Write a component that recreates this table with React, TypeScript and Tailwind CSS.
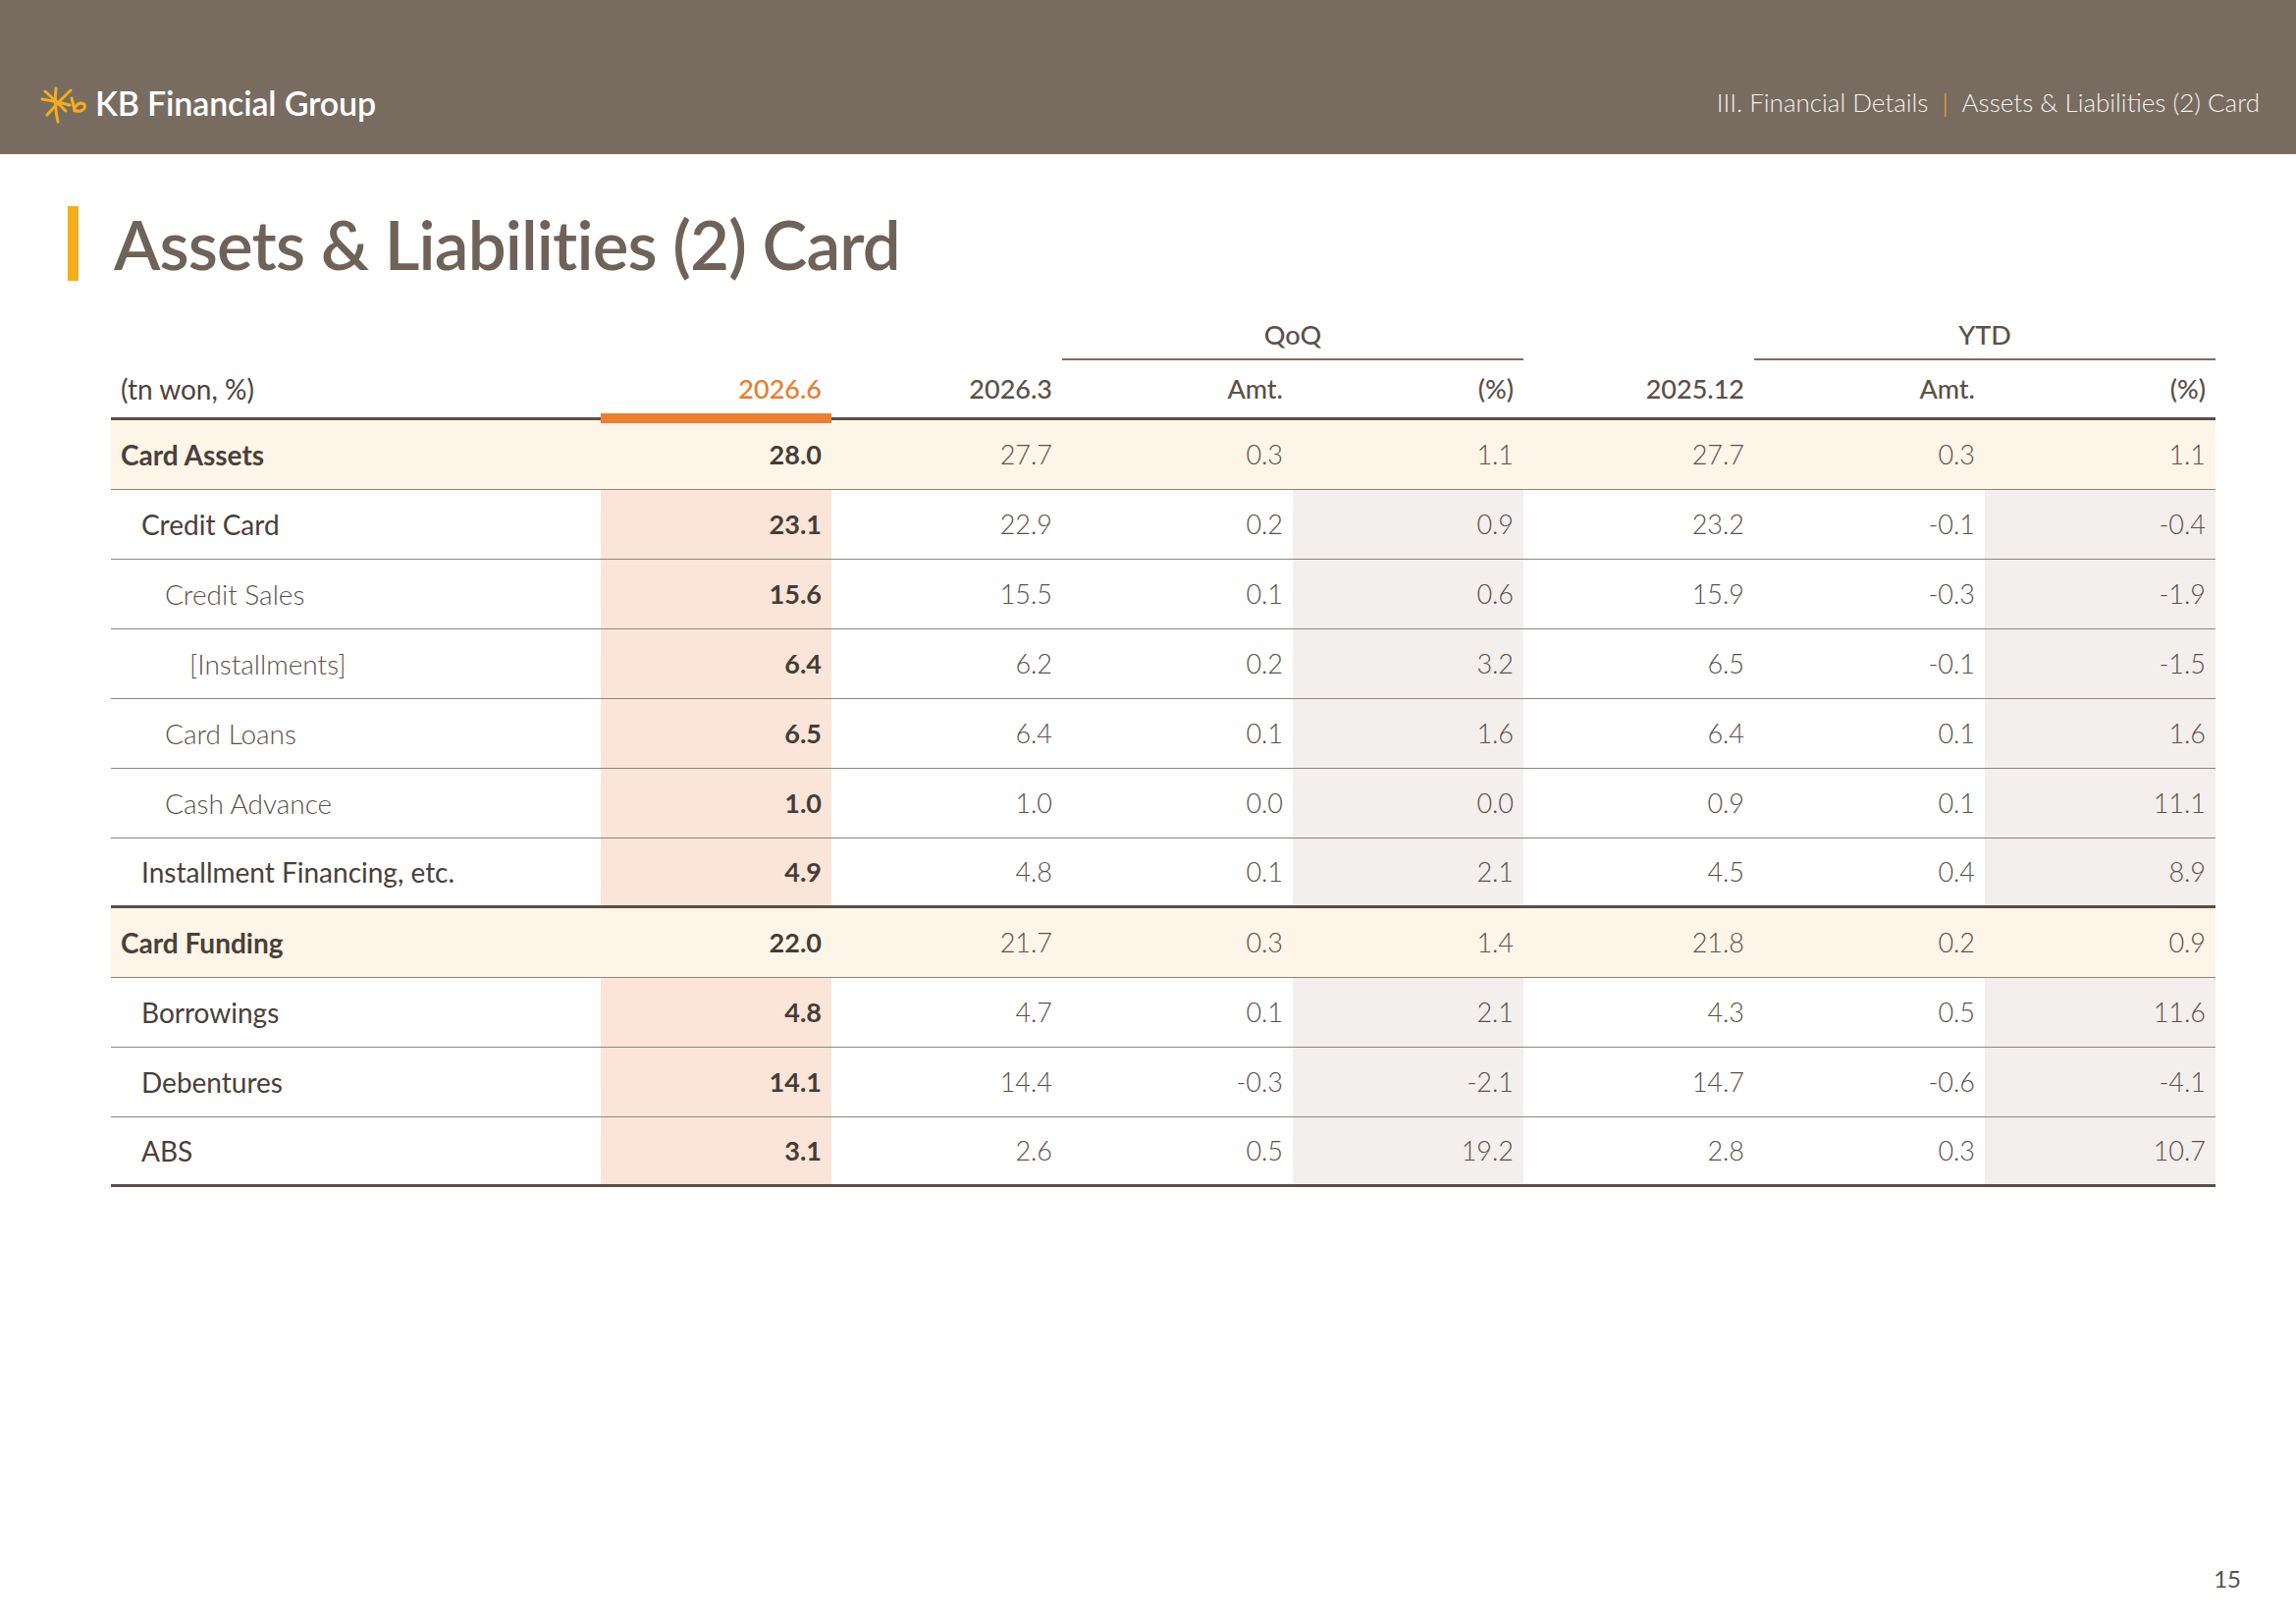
import React from 'react';

type Row = {
  label: string;
  indent: number;
  total?: boolean;
  thick?: boolean;
  vals: string[];
};

const rows: Row[] = [
  { label: 'Card Assets', indent: 0, total: true, vals: ['28.0', '27.7', '0.3', '1.1', '27.7', '0.3', '1.1'] },
  { label: 'Credit Card', indent: 1, vals: ['23.1', '22.9', '0.2', '0.9', '23.2', '-0.1', '-0.4'] },
  { label: 'Credit Sales', indent: 2, vals: ['15.6', '15.5', '0.1', '0.6', '15.9', '-0.3', '-1.9'] },
  { label: '[Installments]', indent: 3, vals: ['6.4', '6.2', '0.2', '3.2', '6.5', '-0.1', '-1.5'] },
  { label: 'Card Loans', indent: 2, vals: ['6.5', '6.4', '0.1', '1.6', '6.4', '0.1', '1.6'] },
  { label: 'Cash Advance', indent: 2, vals: ['1.0', '1.0', '0.0', '0.0', '0.9', '0.1', '11.1'] },
  { label: 'Installment Financing, etc.', indent: 1, thick: true, vals: ['4.9', '4.8', '0.1', '2.1', '4.5', '0.4', '8.9'] },
  { label: 'Card Funding', indent: 0, total: true, vals: ['22.0', '21.7', '0.3', '1.4', '21.8', '0.2', '0.9'] },
  { label: 'Borrowings', indent: 1, vals: ['4.8', '4.7', '0.1', '2.1', '4.3', '0.5', '11.6'] },
  { label: 'Debentures', indent: 1, vals: ['14.1', '14.4', '-0.3', '-2.1', '14.7', '-0.6', '-4.1'] },
  { label: 'ABS', indent: 1, thick: true, vals: ['3.1', '2.6', '0.5', '19.2', '2.8', '0.3', '10.7'] },
];

const indentCls = ['pl-[10px]', 'pl-[31px]', 'pl-[55px]', 'pl-[80px]'];

const gridCols = 'grid grid-cols-[499px_repeat(7,235px)]';

// KB star mark
function KbLogo() {
  return (
    <svg width="54" height="44" viewBox="0 0 54 44" fill="none">
      <g stroke="#f5ad1c" strokeWidth="3" strokeLinecap="round" strokeLinejoin="round">
        <path d="M21 7 Q19 24 23 41" />
        <path d="M7 18 Q20 20 35 24" />
        <path d="M10 10 Q20 19 31 30" />
        <path d="M36 9 Q24 20 12 34" />
        <path d="M37 17 Q39 24 40 30" />
        <path d="M40 27 Q44 20 50 23 Q52 28 46 30 Q43 31 40 29" />
      </g>
    </svg>
  );
}

function cellBg(row: Row, i: number) {
  if (row.total) return '';
  if (i === 0) return 'bg-[#fae5d8]';
  if (i === 3 || i === 6) return 'bg-[#f2efed]';
  return '';
}

export default function App() {
  return (
    <div
      className="relative w-[2339px] h-[1654px] bg-white text-[#5b5048]"
      style={{ fontFamily: 'Lato, "Open Sans", "Liberation Sans", sans-serif' }}
    >
      {/* top bar */}
      <header className="flex h-[157px] items-center justify-between bg-[#786c60] pl-[36px] pr-[37px] pt-[52px]">
        <div className="flex items-center gap-[7px]">
          <KbLogo />
          <span className="text-[34px] font-semibold tracking-[-0.005em] text-white">KB Financial Group</span>
        </div>
        <div className="flex items-center text-[26px] font-light text-[#f4f1ee]">
          <span>III. Financial Details</span>
          <span className="mx-[14px] text-[#f5ad1c]">|</span>
          <span>Assets &amp; Liabilities (2) Card</span>
        </div>
      </header>

      {/* title */}
      <div className="mt-[53px] flex items-center gap-[36px] pl-[69px]">
        <div className="h-[76px] w-[11px] bg-[#f5ad1c]" />
        <h1 className="text-[69px] font-semibold leading-none tracking-[-0.012em] text-[#6e6359]">
          Assets &amp; Liabilities (2) Card
        </h1>
      </div>

      {/* table */}
      <div className="ml-[113px] mt-[31px] w-[2144px]">
        {/* group header */}
        <div className={`${gridCols} h-[50px] text-[27px] font-medium`}>
          <div className="col-span-3" />
          <div className="col-span-2 flex items-center justify-center border-b-[2px] border-[#7a6f66]">QoQ</div>
          <div />
          <div className="col-span-2 flex items-center justify-center border-b-[2px] border-[#7a6f66]">YTD</div>
        </div>
        {/* column header */}
        <div className={`${gridCols} h-[61px] border-b-[3px] border-[#5a4f46] text-[27px] font-medium`}>
          <div className="flex items-center pl-[10px] text-[28px] font-normal text-[#4d433b]">(tn won, %)</div>
          <div className="relative flex items-center justify-end pr-[10px] text-[#ea7b2c]">
            2026.6
            <div className="absolute bottom-[-6px] left-0 right-0 h-[10px] bg-[#ee7d2f]" />
          </div>
          <div className="flex items-center justify-end pr-[10px]">2026.3</div>
          <div className="flex items-center justify-end pr-[10px]">Amt.</div>
          <div className="flex items-center justify-end pr-[10px]">(%)</div>
          <div className="flex items-center justify-end pr-[10px]">2025.12</div>
          <div className="flex items-center justify-end pr-[10px]">Amt.</div>
          <div className="flex items-center justify-end pr-[10px]">(%)</div>
        </div>
        {/* body */}
        {rows.map((r) => (
          <div
            key={r.label}
            className={`${gridCols} h-[71px] ${r.thick ? 'border-b-[3px] border-[#5a4f46]' : 'border-b border-[#8f857d]'} ${
              r.total ? 'bg-[#fdf5e7]' : ''
            } text-[27px]`}
          >
            <div
              className={`flex items-center text-[28px] ${indentCls[r.indent]} ${
                r.total
                  ? 'font-bold text-[#4a4038]'
                  : r.indent === 1
                  ? 'font-normal text-[#4a4038]'
                  : 'font-light text-[#5b5048]'
              }`}
            >
              {r.label}
            </div>
            {r.vals.map((v, i) => (
              <div
                key={i}
                className={`flex items-center justify-end pr-[10px] ${cellBg(r, i)} ${
                  i === 0 ? 'font-bold text-[#463c35]' : 'font-light text-[#5b5048]'
                }`}
              >
                {v}
              </div>
            ))}
          </div>
        ))}
      </div>

      <div className="absolute bottom-[28px] right-[56px] text-[24px] text-[#5b5048]">15</div>
    </div>
  );
}
